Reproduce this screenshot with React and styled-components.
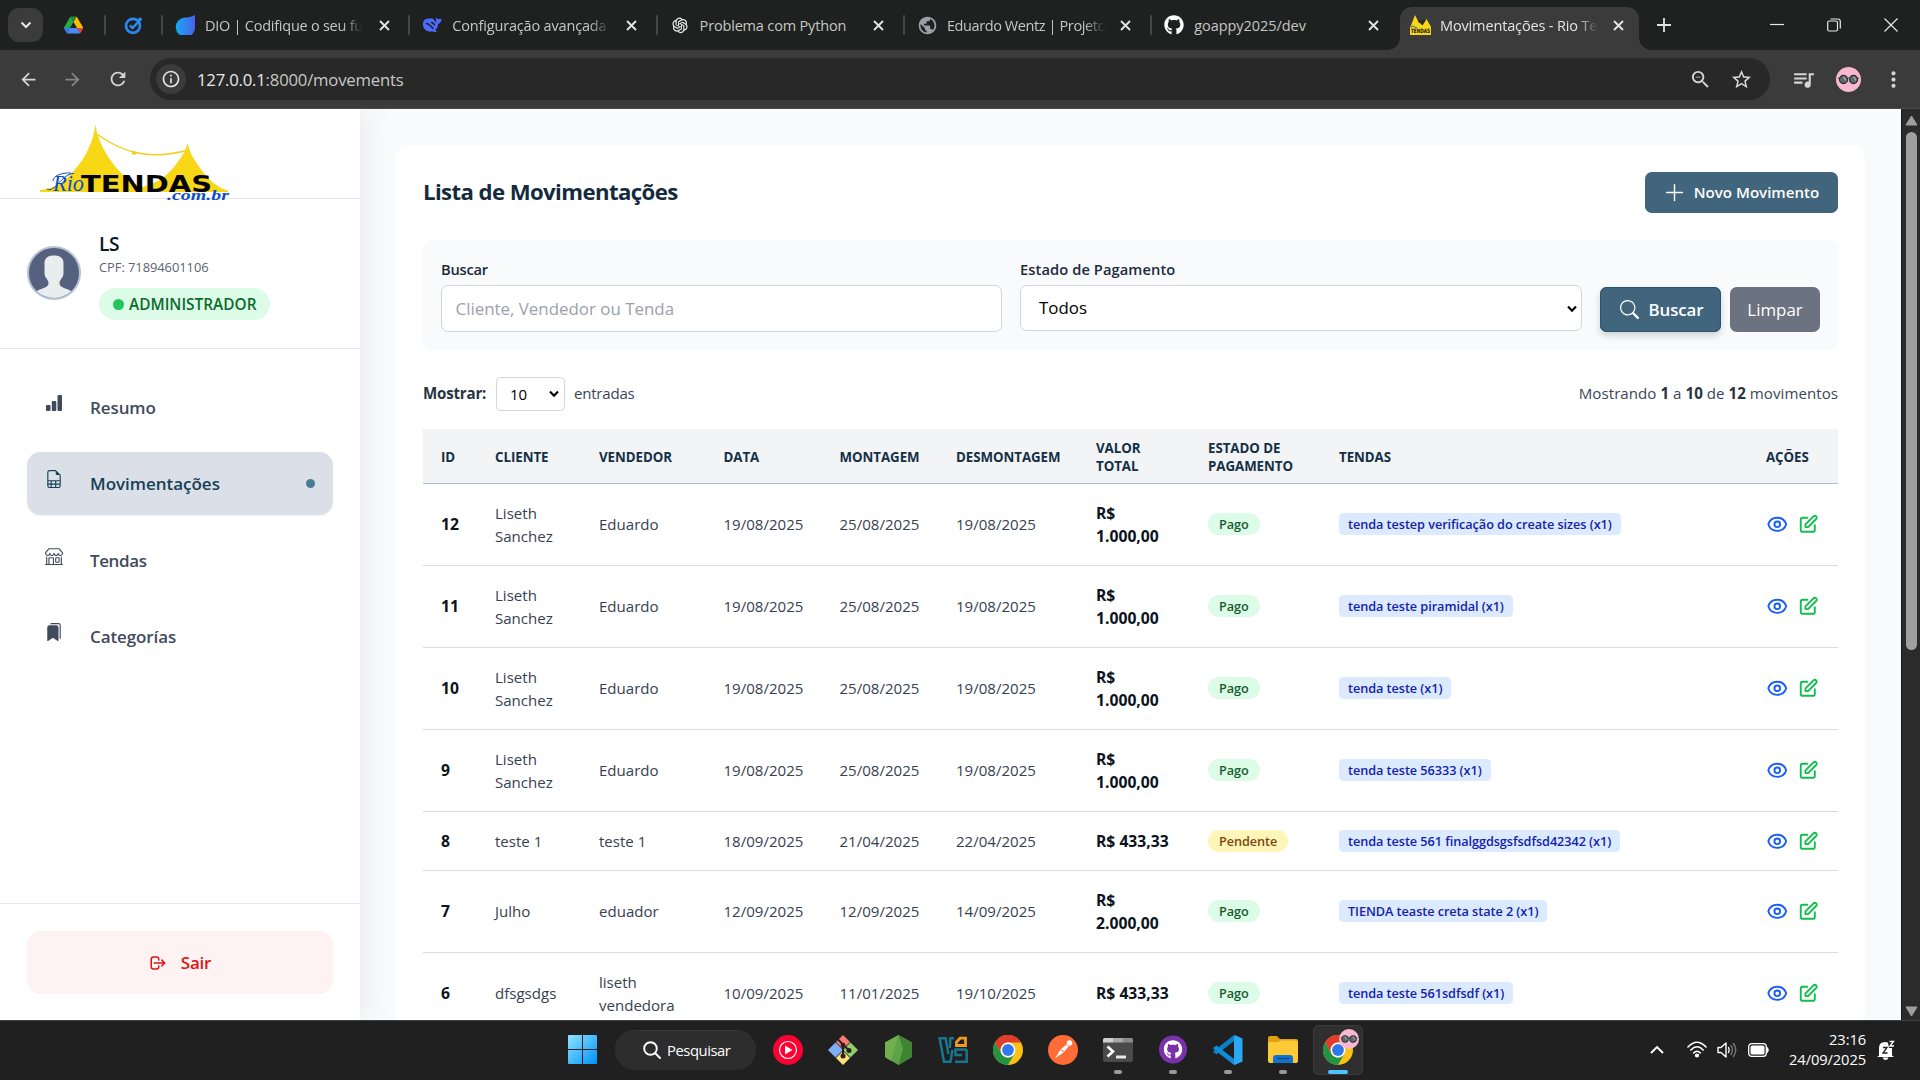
import React from "react";
import styled, { createGlobalStyle, css } from "styled-components";
import { BsFileEarmarkSpreadsheet, BsShop, BsBookmarksFill, BsPlusLg, BsSearch } from "react-icons/bs";
import { MdArrowBack, MdArrowForward, MdRefresh, MdInfoOutline, MdStarBorder, MdZoomOut, MdQueueMusic, MdMoreVert, MdPublic } from "react-icons/md";
import { FaGithub } from "react-icons/fa";
import { AiOutlineOpenAI } from "react-icons/ai";

const Global = createGlobalStyle`
  *, *::before, *::after { box-sizing: border-box; }
  body { margin: 0; overflow: hidden; background: #202020; }
  body, button, input, select { font-family: "Open Sans", "Noto Sans", sans-serif; }
  svg { display: block; flex: none; }
`;

const Screen = styled.div`
  width: 1920px;
  height: 1080px;
  display: flex;
  flex-direction: column;
  overflow: hidden;
`;

/* ---------- browser: tab strip ---------- */

const TabStrip = styled.div`
  height: 50px;
  flex: none;
  background: #1f2120;
  display: flex;
  align-items: center;
`;
const TabSearch = styled.div`
  width: 35px;
  height: 34px;
  margin-left: 8px;
  border-radius: 11px;
  background: #3b3b3b;
  display: grid;
  place-items: center;
`;
const PinnedTab = styled.div`
  width: ${(p) => p.$w}px;
  display: flex;
  justify-content: center;
`;
const Divider = styled.div`
  width: 2px;
  height: 20px;
  flex: none;
  border-radius: 1px;
  background: #444645;
`;
const TabBox = styled.div`
  width: ${(p) => p.$w || 245.3}px;
  flex: none;
  height: 43px;
  align-self: flex-end;
  padding-bottom: 7px;
  display: flex;
  align-items: center;
  padding-left: ${(p) => (p.$active ? 10 : 12)}px;
  ${(p) =>
    p.$active &&
    css`
      position: relative;
      margin-left: 2.5px;
      background: #3b3b3b;
      border-radius: 12px 12px 0 0;
      &::before, &::after {
        content: "";
        position: absolute;
        bottom: 0;
        width: 12px;
        height: 12px;
      }
      &::before { left: -12px; background: radial-gradient(circle at 0 0, transparent 11.5px, #3b3b3b 12px); }
      &::after { right: -12px; background: radial-gradient(circle at 100% 0, transparent 11.5px, #3b3b3b 12px); }
    `}
`;
const TabLabel = styled.span`
  width: 158px;
  margin-left: 10px;
  padding-top: 2px;
  overflow: hidden;
  white-space: nowrap;
  font-size: 14.5px;
  line-height: 20px;
  letter-spacing: ${(p) => p.$ls || -0.17}px;
  color: ${(p) => (p.$active ? "#e3e3e3" : "#c4c7c5")};
  ${(p) => p.$fade && css`mask-image: linear-gradient(90deg, #000 87%, transparent 100%);`}
`;
const CloseX = styled.span`
  width: 20px;
  margin-left: 11px;
  display: grid;
  place-items: center;
  svg { width: 11px; height: 11px; stroke: #e3e3e3; stroke-width: 1.9; fill: none; }
`;
const TabIcon = styled.span`
  width: 20px;
  height: 20px;
  flex: none;
  display: grid;
  place-items: center;
`;
const WindowButtons = styled.div`
  margin-left: auto;
  margin-right: 1px;
  height: 48px;
  display: flex;
  svg { stroke: #e8e8e8; fill: none; stroke-width: 1.2; }
`;
const WindowButton = styled.div`
  width: 57px;
  display: grid;
  place-items: center;
`;

/* ---------- browser: toolbar ---------- */

const Toolbar = styled.div`
  height: 59px;
  flex: none;
  background: #3b3b3b;
  border-bottom: 1px solid #4a4a4a;
  display: flex;
  align-items: center;
  color: #d0d0d0;
`;
const ToolIcon = styled.span`
  width: ${(p) => p.$w}px;
  flex: none;
  display: flex;
  justify-content: center;
  color: ${(p) => (p.$dim ? "#858585" : "#d5d5d5")};
`;
const Omnibox = styled.div`
  width: 1620px;
  flex: none;
  height: 42px;
  margin-left: 3px;
  border-radius: 21px;
  background: #282828;
  display: flex;
  align-items: center;
  padding: 0 8px 0 6px;
`;
const InfoCircle = styled.span`
  width: 30px;
  height: 30px;
  border-radius: 50%;
  background: #3b3b3b;
  display: grid;
  place-items: center;
  color: #e3e3e3;
`;
const Url = styled.span`
  margin-left: 11px;
  padding-top: 1px;
  flex: 1;
  font-size: 16.7px;
  line-height: 24px;
  letter-spacing: -0.2px;
  color: #c7c7c7;
  b { font-weight: 400; color: #e8e8e8; }
`;

/* ---------- page ---------- */

const Page = styled.div`
  flex: 1;
  min-height: 0;
  display: flex;
  background: #f9fafc;
`;
const Sidebar = styled.aside`
  width: 360px;
  flex: none;
  background: #fff;
  display: flex;
  flex-direction: column;
  box-shadow: 0 0 34px rgba(15, 23, 42, 0.09);
  clip-path: inset(0 -60px 0 0);
`;
const LogoBox = styled.div`
  height: 90px;
  flex: none;
  padding: 16px 0 0 39px;
  border-bottom: 1px solid #e3e6eb;
`;
const Profile = styled.div`
  height: 150px;
  flex: none;
  padding: 27px;
  border-bottom: 1px solid #e3e6eb;
  display: flex;
  align-items: center;
  gap: 18px;
  > svg { margin-top: -1px; }
`;
const ProfileInfo = styled.div`
  margin-top: 4px;
`;
const ProfileName = styled.div`
  font-size: 19.2px;
  font-weight: 600;
  line-height: 25px;
  letter-spacing: -0.4px;
  color: #0b1526;
`;
const ProfileDoc = styled.div`
  font-size: 12.9px;
  line-height: 18px;
  margin-top: 2px;
  letter-spacing: -0.05px;
  color: #5b6472;
`;
const RoleBadge = styled.div`
  margin-top: 12px;
  width: 171px;
  height: 32px;
  border-radius: 16px;
  background: #dcfce7;
  color: #0b6b2e;
  display: flex;
  align-items: center;
  padding-left: 14px;
  font-size: 15.4px;
  font-weight: 600;
  &::before {
    content: "";
    width: 11px;
    height: 11px;
    margin-right: 5px;
    border-radius: 50%;
    background: #22c55e;
  }
`;
const Nav = styled.nav`
  flex: 1;
  padding: 27px 27px 0;
  display: flex;
  flex-direction: column;
  gap: 13.3px;
`;
const NavItem = styled.a`
  height: 63px;
  flex: none;
  border-radius: 13.5px;
  padding: 0 18px;
  display: flex;
  align-items: center;
  font-size: 17px;
  font-weight: 600;
  letter-spacing: ${(p) => p.$ls || -0.1}px;
  color: ${(p) => (p.$active ? "#174055" : "#3f4b5c")};
  background: ${(p) => (p.$active ? "#dbdfe8" : "transparent")};
  box-shadow: ${(p) => (p.$active ? "0 1px 2px rgba(0,0,0,.06)" : "none")};
  svg { width: 18px; height: 18px; margin: -9px 27px 0 0; }
  ${(p) =>
    p.$active &&
    css`
      &::after {
        content: "";
        width: 9px;
        height: 9px;
        margin-left: auto;
        border-radius: 50%;
        background: #4a7c93;
      }
    `}
`;
const SidebarFoot = styled.div`
  height: 117px;
  flex: none;
  border-top: 1px solid #e3e6eb;
  padding: 27px;
`;
const LogoutButton = styled.button`
  width: 100%;
  height: 63px;
  border: 0;
  border-radius: 13.5px;
  background: #fef2f2;
  color: #dc1414;
  display: flex;
  align-items: center;
  justify-content: center;
  gap: 14px;
  padding: 0;
  font-size: 17px;
  font-weight: 600;
  letter-spacing: -0.2px;
`;

const Main = styled.main`
  flex: 1;
  min-width: 0;
  padding: 36px 36px 0;
  overflow: hidden;
`;
const Card = styled.section`
  height: 1200px;
  background: #fff;
  border-radius: 13.5px;
  padding: 27px;
`;
const CardHead = styled.header`
  height: 41px;
  display: flex;
  align-items: center;
  justify-content: space-between;
`;
const Title = styled.h1`
  margin: 0;
  padding-bottom: 1px;
  font-size: 22.2px;
  font-weight: 700;
  line-height: 32px;
  letter-spacing: -0.6px;
  color: #142b3d;
`;
const Button = styled.button`
  width: ${(p) => p.$w}px;
  height: ${(p) => p.$h || 45}px;
  flex: none;
  border: 0;
  padding: ${(p) => (p.$h ? "0 0 2px 2px" : 0)};
  border-radius: 6.75px;
  display: flex;
  align-items: center;
  justify-content: center;
  gap: 10px;
  color: #fff;
  background: ${(p) => (p.$muted ? "#6b7280" : "#40657c")};
  font-size: ${(p) => p.$fs || 16.9}px;
  font-weight: ${(p) => (p.$muted ? 400 : 600)};
  white-space: nowrap;
  ${(p) => p.$raised && css`padding-left: 2px; letter-spacing: -0.1px; box-shadow: inset 0 0 0 1px #255772, 0 4px 7px rgba(0, 0, 0, 0.16);`}
`;
const PlusMark = styled(BsPlusLg)`
  width: 23px;
  height: 23px;
  margin: 1px -2px 0 -3px;
`;
const Filters = styled.form`
  margin-top: 27px;
  height: 110px;
  padding: 18px;
  border-radius: 9px;
  background: #f9fafc;
  display: flex;
  align-items: flex-start;
`;
const Field = styled.label`
  width: ${(p) => p.$w || 561}px;
  margin-right: 18px;
  font-size: 14.7px;
  line-height: 22.5px;
  font-weight: 600;
  letter-spacing: ${(p) => p.$ls || -0.05}px;
  color: #1d2a3c;
`;
const TextInput = styled.input`
  display: block;
  width: 100%;
  height: 47px;
  margin-top: 4.5px;
  padding: 0 13.5px;
  border: 1px solid #d1d5db;
  border-radius: 6.75px;
  background: #fff;
  font-size: 16.9px;
  outline: 0;
  &::placeholder { color: #9aa1ad; opacity: 1; }
`;
const Select = styled.div`
  width: ${(p) => (p.$small ? "69px" : "100%")};
  height: ${(p) => (p.$small ? 34 : 46)}px;
  margin-top: ${(p) => (p.$small ? 0 : 4.5)}px;
  padding: ${(p) => (p.$small ? "0 5px 0 13px" : "1px 4px 0 18px")};
  border: 1px solid #d1d5db;
  border-radius: ${(p) => (p.$small ? 4.5 : 6.75)}px;
  background: #fff;
  display: flex;
  align-items: center;
  justify-content: space-between;
  font-size: ${(p) => (p.$small ? 15 : 16.9)}px;
  font-weight: 400;
  letter-spacing: 0;
  color: #000;
`;
const FilterActions = styled.div`
  margin-top: 29px;
  display: flex;
  gap: 9px;
`;
const ListBar = styled.div`
  margin-top: 27px;
  height: 34px;
  display: flex;
  align-items: center;
  font-size: 15.1px;
  color: #3b4657;
  b { font-weight: 700; color: #27333f; }
`;
const ShowLabel = styled.b`
  width: 73px;
  padding-bottom: 2px;
  letter-spacing: -0.2px;
`;
const Entries = styled.span`
  margin-left: 9px;
  padding-bottom: 2px;
  letter-spacing: -0.25px;
`;
const Summary = styled.span`
  margin-left: auto;
  padding-bottom: 2px;
  letter-spacing: 0.04px;
`;

/* ---------- table ---------- */

const Table = styled.table`
  width: 1415px;
  margin-top: 18px;
  table-layout: fixed;
  border-collapse: separate;
  border-spacing: 0;
`;
const Th = styled.th`
  height: 55px;
  padding: 1px 0 0 18px;
  border-bottom: 1px solid #b3bfd0;
  background: #f2f4f6;
  text-align: left;
  white-space: nowrap;
  font-size: 13.3px;
  line-height: 18px;
  font-weight: 700;
  letter-spacing: -0.05px;
  color: #123046;
`;
const Td = styled.td`
  height: ${(p) => p.$h}px;
  padding: 0 0 0 18px;
  border-bottom: 1px solid #d9dce5;
  font-size: ${(p) => (p.$strong ? 15.7 : 15.05)}px;
  line-height: 22.5px;
  white-space: nowrap;
  vertical-align: middle;
  font-weight: ${(p) => (p.$strong ? 700 : 400)};
  color: ${(p) => (p.$strong ? "#0c1320" : "#374151")};
`;
const Chip = styled.span`
  display: inline-block;
  vertical-align: middle;
  height: 22px;
  line-height: 22.5px;
  padding: 0 ${(p) => (p.$tag ? 9 : 11)}px;
  border-radius: ${(p) => (p.$tag ? 4.5 : 11)}px;
  font-size: 12.7px;
  font-weight: 600;
  letter-spacing: -0.06px;
  background: ${(p) => (p.$tag ? "#dbeafe" : p.$warn ? "#fef5b8" : "#dcfce7")};
  color: ${(p) => (p.$tag ? "#1423aa" : p.$warn ? "#7c4a0c" : "#175c31")};
  margin-top: -4px;
`;
const RowActions = styled.div`
  display: flex;
  gap: 8.5px;
  padding-bottom: 0.5px;
`;

/* ---------- scrollbar ---------- */

const ScrollTrack = styled.div`
  width: 19px;
  flex: none;
  background: #2b2b2b;
  border-left: 1px solid #1a1a1a;
  display: flex;
  flex-direction: column;
  align-items: center;
  padding: 6px 0 3px;
  svg { fill: #9f9f9f; }
`;
const ScrollThumb = styled.div`
  width: 11px;
  height: 518px;
  margin: 6px 0 auto;
  border-radius: 6px;
  background: #9f9f9f;
`;

/* ---------- taskbar ---------- */

const Taskbar = styled.footer`
  height: 60px;
  flex: none;
  background: #202020;
  border-top: 1px solid #3e3e3e;
  display: flex;
  align-items: center;
  padding: 0 0 2px 568px;
  color: #fff;
`;
const SearchPill = styled.div`
  width: 141px;
  height: 40px;
  margin: 0 7px 0 18px;
  padding-left: 28px;
  border-radius: 20px;
  background: #2d2d2d;
  border-top: 1px solid #383838;
  display: flex;
  align-items: center;
  gap: 6px;
  font-size: 14.8px;
  letter-spacing: -0.45px;
`;
const AppSlot = styled.div`
  width: 50px;
  height: 50px;
  margin-right: 5px;
  position: relative;
  flex: none;
  display: grid;
  place-items: center;
  border-radius: 6px;
  ${(p) => p.$active && css`background: #2f2f2f; box-shadow: inset 0 0 0 1px #3b3b3b;`}
  &::after {
    content: "";
    position: absolute;
    bottom: 1px;
    left: 50%;
    transform: translateX(-50%);
    width: ${(p) => (p.$active ? 20 : 8)}px;
    height: 4px;
    border-radius: 2px;
    background: ${(p) => (p.$active ? "#4cc2ff" : p.$running ? "#9a9a9a" : "transparent")};
  }
`;
const FaceBadge = styled.span`
  position: absolute;
  top: 4px;
  right: 4px;
`;
const Tray = styled.div`
  margin-left: auto;
  height: 100%;
  display: flex;
  align-items: center;
`;
const TraySlot = styled.span`
  width: ${(p) => p.$w}px;
  display: flex;
  justify-content: center;
`;
const Clock = styled.div`
  width: 87px;
  text-align: right;
  font-size: 14.7px;
  line-height: 20px;
  letter-spacing: -0.1px;
  padding-bottom: 2px;
`;
const Bell = styled.span`
  width: 40px;
  margin-right: 14px;
  display: flex;
  justify-content: center;
`;

/* ---------- drawings ---------- */

const X = () => (
  <svg viewBox="0 0 11 11"><path d="M1 1L10 10M10 1L1 10" /></svg>
);
const Caret = () => (
  <svg width="10" height="8" viewBox="0 0 10 8" fill="none" stroke="#000" strokeWidth="2.1"><path d="M1 1.5L5 5.700L9 1.500" /></svg>
);
const TendasLogo = () => (
  <svg width="192" height="80" viewBox="0 0 192 80">
    <path d="M1 65C22 63 31 50 38 42C48 30 54 16 56.500 0C59 16 66 28 75 40C84 51 92 58 104 62C120 58 131 48 138 38C144 30 147 25 148.500 18C150 26 154 33 159 40C167 52 176 62 189 65.500V67H1z" fill="#f7d716" />
    <path d="M59 10C84 27 108 35 146 26" fill="none" stroke="#f2cf1a" strokeWidth="1.400" />
    <rect x="93" y="26.500" width="4" height="3" fill="#f2cf1a" />
    <text x="14" y="66" fontFamily="Liberation Serif, serif" fontStyle="italic" fontSize="24" fill="#0b4fc4" textLength="31" lengthAdjust="spacingAndGlyphs">Rio</text>
    <path d="M8 64C10 66 14 64 18 60C24 53 30 48 35 48.500M14 56C14 51 22 47.500 32 48" fill="none" stroke="#0b4fc4" strokeWidth="1" />
    <text x="42" y="67" fontFamily="DejaVu Sans, sans-serif" fontWeight="700" fontSize="23.500" fill="#050505" textLength="131" lengthAdjust="spacingAndGlyphs">TENDAS</text>
    <text x="128" y="75" fontFamily="Liberation Serif, serif" fontStyle="italic" fontWeight="700" fontSize="15" fill="#0b4fc4" textLength="62" lengthAdjust="spacingAndGlyphs">.com.br</text>
  </svg>
);
const Avatar = () => (
  <svg width="54" height="54" viewBox="0 0 54 54">
    <clipPath id="av"><circle cx="27" cy="27" r="25" /></clipPath>
    <circle cx="27" cy="27" r="26" fill="#56607f" stroke="#b6c3d6" strokeWidth="2" />
    <path clipPath="url(#av)" d="M27 9.500C33 9.500 36.500 12 36.500 17V27C36.500 32 32.500 33.500 32.500 37C32.500 42 38 41.500 44 45L50 54H4L10 45C16 41.500 21.500 42 21.500 37C21.500 33.500 17.500 32 17.500 27V17C17.500 12 21 9.500 27 9.500z" fill="#e8eeee" />
  </svg>
);
const BarsIcon = () => (
  <svg viewBox="0 0 18 18" fill="#3f4b5c"><rect x="1" y="11" width="4.500" height="6" rx="1" /><rect x="6.800" y="7" width="4.500" height="10" rx="1" /><rect x="12.500" y="1" width="4.500" height="16" rx="1" /></svg>
);
const LogoutIcon = () => (
  <svg width="18" height="18" viewBox="0 0 24 24" fill="none" stroke="#dc1414" strokeWidth="2" strokeLinecap="round" strokeLinejoin="round">
    <path d="M17 16l4-4m0 0l-4-4m4 4H7m6 4v1a3 3 0 01-3 3H6a3 3 0 01-3-3V7a3 3 0 013-3h4a3 3 0 013 3v1" />
  </svg>
);
const EyeIcon = () => (
  <svg width="22.5" height="22.5" viewBox="0 0 24 24" fill="none" stroke="#155dfc" strokeWidth="2" strokeLinecap="round" strokeLinejoin="round">
    <path d="M15 12a3 3 0 11-6 0 3 3 0 016 0z" />
    <path d="M2.458 12C3.732 7.943 7.523 5 12 5c4.478 0 8.268 2.943 9.542 7-1.274 4.057-5.064 7-9.542 7-4.477 0-8.268-2.943-9.542-7z" />
  </svg>
);
const EditIcon = () => (
  <svg width="22.5" height="22.5" viewBox="0 0 24 24" fill="none" stroke="#0fbf4b" strokeWidth="2" strokeLinecap="round" strokeLinejoin="round">
    <path d="M11 5H6a2 2 0 00-2 2v11a2 2 0 002 2h11a2 2 0 002-2v-5m-1.414-9.414a2 2 0 112.828 2.828L11.828 15H9v-2.828l8.586-8.586z" />
  </svg>
);
const Triangle = ({ down }) => (
  <svg width="13" height="11" viewBox="0 0 13 11"><path d={down ? "M1 1H12L6.500 10z" : "M1 10H12L6.500 1z"} stroke="#9f9f9f" strokeLinejoin="round" /></svg>
);
const DriveIcon = () => (
  <svg width="19" height="18" viewBox="0 0 87 78">
    <path d="M6.600 66.900l3.900 6.600c.8 1.400 1.900 2.500 3.300 3.300L27.500 53H0c0 1.500.4 3.100 1.200 4.500z" fill="#3c78e8" />
    <path d="M43.600 25L29.900 1.200c-1.300.8-2.500 1.900-3.300 3.300L1.200 48.500A9 9 0 000 53h27.500z" fill="#2aa84a" />
    <path d="M73.500 76.800c1.400-.8 2.500-1.900 3.300-3.300l9.300-16c.8-1.400 1.200-3 1.200-4.500H59.800l5.800 11.500z" fill="#ea4335" />
    <path d="M43.600 25L57.400 1.200C56 .4 54.400 0 52.900 0H34.400c-1.600 0-3.100.4-4.500 1.200z" fill="#1d8a3a" />
    <path d="M59.800 53H27.500L13.700 76.800c1.400.8 3 1.200 4.500 1.200h50.900c1.600 0 3.100-.4 4.500-1.200z" fill="#4a8bf5" />
    <path d="M73.400 26.500l-12.700-22A9 9 0 0057.400 1.200L43.600 25l16.200 28h27.400c0-1.500-.4-3.100-1.200-4.500z" fill="#fbbc04" />
  </svg>
);
const CheckIcon = () => (
  <svg width="19" height="19" viewBox="0 0 19 19" fill="none" stroke="#2b87f0" strokeWidth="2.700">
    <circle cx="9" cy="9.800" r="7" /><path d="M5.800 9.300L8.600 12L15.500 4.500" stroke="#2f8df5" strokeWidth="2.300" /><circle cx="16" cy="3.500" r="1.200" fill="#2b87f0" strokeWidth="1.500" />
  </svg>
);
const DioIcon = () => (
  <svg width="20" height="20" viewBox="0 0 20 20">
    <defs><linearGradient id="dio" x1="0" x2="1"><stop offset="0" stopColor="#14a9f0" /><stop offset="1" stopColor="#4c60f0" /></linearGradient></defs>
    <path d="M20 0V10.500A9.700 9.700 0 1 1 10.500 2.500C15 2.500 17 1.500 20 0z" fill="url(#dio)" />
  </svg>
);
const WhaleIcon = () => (
  <svg width="20" height="18" viewBox="0 0 21 18" fill="#4d6bfe">
    <path d="M1 7C1.500 3.500 5 1.500 8 2.500C9 1.500 11 1.800 12.500 3.500L15.500 7C14.500 4.500 14.500 3 15 1.200C16 3 17.200 3 20.500 2.500C20.500 5.500 19 7.500 16.800 8C17 11 15.500 13 14 14L15.500 16C13.500 17 12 16.200 10.500 15.600C4.500 17.500 .3 12 1 7z" />
    <path d="M4 7.500C7 6.500 9 10.500 12 13M9.500 6.500C11 6 13 8 13.500 9.500" fill="none" stroke="#1f2120" strokeWidth="1.500" />
  </svg>
);
const TentFavicon = () => (
  <svg width="21" height="20" viewBox="0 0 21 20">
    <path d="M0 20V13L5 0L9 8H13L16.500 4L21 12V20z" fill="#f7d716" />
    <path d="M7.500 5.500L16 5L12.500 10.500z" fill="#2b2b1b" />
    <text x="1" y="18" fontSize="6" fontWeight="700" fontFamily="DejaVu Sans, sans-serif" textLength="19" lengthAdjust="spacingAndGlyphs" fill="#111">TENDAS</text>
    <path d="M1 12.500Q3 9.500 4.500 12L7 13" stroke="#1c6a9a" fill="none" />
  </svg>
);
const PinkFace = ({ size = 25 }) => (
  <svg width={size} height={size} viewBox="0 0 25 25">
    <circle cx="12.500" cy="12.500" r="12.500" fill="#f8b8cf" />
    <circle cx="7.500" cy="12.500" r="4" fill="#5f686b" stroke="#2b3032" strokeWidth="1.300" />
    <circle cx="17.500" cy="12.500" r="4" fill="#5f686b" stroke="#2b3032" strokeWidth="1.300" />
    <path d="M7.500 9.500L10 13.500M17.500 9.500L20 13.500" stroke="#a3b9ba" strokeWidth="1.200" />
    <path d="M11 11.500Q12.500 10.500 14 11.500M2 11L4 12M23 11L21 12" stroke="#33383a" fill="none" />
  </svg>
);
const WindowsIcon = () => (
  <svg width="29" height="29" viewBox="0 0 29 29">
    <defs><linearGradient id="win" x1="0" y1="0" x2="1" y2="1"><stop offset="0" stopColor="#8fe4ff" /><stop offset="1" stopColor="#0091f8" /></linearGradient></defs>
    <path d="M1 0H14V14H0V1Q0 0 1 0zM15 0H28Q29 0 29 1V14H15zM0 15H14V29H1Q0 29 0 28zM15 15H29V28Q29 29 28 29H15z" fill="url(#win)" />
  </svg>
);
const YtMusicIcon = () => (
  <svg width="30" height="30" viewBox="0 0 30 30"><circle cx="15" cy="15" r="15" fill="#ff0033" /><circle cx="15" cy="15" r="8.500" fill="none" stroke="#fff" strokeWidth="1.200" /><path d="M12 10.500L19.500 15L12 19.500z" fill="#fff" /></svg>
);
const GitIcon = () => (
  <svg width="30" height="30" viewBox="0 0 30 30">
    <path d="M15 0L22 7L15 14L8 7z" fill="#f77a73" /><path d="M7.500 7.500L15 15L7.500 22.500L0 15z" fill="#7fb0f5" /><path d="M22.500 7.500L30 15L22.500 22.500L15 15z" fill="#8fd067" /><path d="M15 16L22 23L15 30L8 23z" fill="#fde07a" />
    <path d="M10 4.500L15 9.500V21M15.500 10L21 15.500" stroke="#2b2020" strokeWidth="2" fill="none" />
    <circle cx="15" cy="10" r="2.300" fill="#2b2020" /><circle cx="15" cy="21" r="2.500" fill="#2b2020" /><circle cx="21" cy="15.500" r="2.500" fill="#2b2020" />
  </svg>
);
const NodeIcon = () => (
  <svg width="27" height="30" viewBox="0 0 27 30">
    <path d="M13.500 0L27 7.500V22L13.500 30L0 22V7.500z" fill="#5da348" /><path d="M13.500 0L27 7.500V22L13.500 30L18 14z" fill="#3f8335" /><path d="M0 7.500L13.500 0L6 26L0 22z" fill="#6fb04c" />
  </svg>
);
const VbIcon = () => (
  <svg width="30" height="28" viewBox="0 0 30 28" fill="none" stroke="#17768f" strokeWidth="2.500">
    <path d="M10.500 18L7.500 2.200H1.600L6 25.800H12.500L14.500 14" />
    <path d="M16 2.200H12.500L11.800 12M28.700 13.500H17.500V19H24M17 25.800H28.700V13.500" />
    <path d="M18.500 9.500V6L22 2.200H27.500V9.500z" stroke="#f29a1d" strokeWidth="2.800" />
  </svg>
);
const ChromeIcon = () => (
  <svg width="30" height="30" viewBox="0 0 30 30">
    <circle cx="15" cy="15" r="15" fill="#fbc116" />
    <path d="M2 7.500A15 15 0 0 1 28 7.500H15A7.500 7.500 0 0 0 8.500 18.700z" fill="#e33b2e" />
    <path d="M2 7.500A15 15 0 0 0 15 30L21.500 18.700A7.500 7.500 0 0 1 8.500 18.700z" fill="#229342" />
    <circle cx="15" cy="15" r="7.400" fill="#fff" /><circle cx="15" cy="15" r="5.900" fill="#3078f0" />
  </svg>
);
const PostmanIcon = () => (
  <svg width="30" height="30" viewBox="0 0 30 30"><circle cx="15" cy="15" r="15" fill="#ff6c37" /><path d="M7 23.500L12.500 14.500L18.500 9.500L20.500 11.500L15.500 17.500L9 22z" fill="#fff" /><circle cx="21.500" cy="8" r="2.700" fill="#fff" /><path d="M12.500 15L16 16.500" stroke="#ff6c37" /></svg>
);
const TerminalIcon = () => (
  <svg width="30" height="24" viewBox="0 0 30 24"><rect width="30" height="24" rx="2" fill="#4a4a4a" /><path d="M0 4.500V2Q0 0 2 0H10V4.500z" fill="#cfcfcf" /><path d="M10 0H20V4.500H10z" fill="#a8a8a8" /><path d="M20 0H28Q30 0 30 2V4.500H20z" fill="#8a8a8a" /><path d="M4.500 8.500L10 13.500L4.500 18.500" fill="none" stroke="#fff" strokeWidth="2.600" /><rect x="13" y="17.500" width="10" height="3" fill="#e8e8e8" /></svg>
);
const GithubDesktop = () => (
  <svg width="28" height="29" viewBox="0 0 28 28">
    <circle cx="14" cy="14" r="14" fill="#7b32a8" />
    <FaGithub x="4.5" y="4.5" size={19} color="#fff" />
  </svg>
);
const VsCodeIcon = () => (
  <svg width="30" height="30" viewBox="0 0 30 30">
    <path d="M21 6L3.500 19.500L.5 17.500V16L21 0z" fill="#0b7fc7" /><path d="M21 24L3.500 10.500L.5 12.500V14L21 30z" fill="#0d8ddb" /><path d="M21.500 0L29.500 3.500V26.500L21.500 30C20.500 29.700 21 28 21 28V2z" fill="#2aa9f2" />
  </svg>
);
const FolderIcon = () => (
  <svg width="30" height="27" viewBox="0 0 30 27"><path d="M0 2Q0 0 2 0H9L12 3H28Q30 3 30 5V10H0z" fill="#dfa10d" /><path d="M0 6H10L12 4.500H28Q30 4.500 30 6.500V25Q30 27 28 27H2Q0 27 0 25z" fill="#fdc936" /><path d="M5 27V22Q5 19 8 19H22Q25 19 25 22V27z" fill="#1173cf" /><path d="M9 22.500H21" stroke="#0b4f94" strokeWidth="1.500" /></svg>
);
const WifiIcon = () => (
  <svg width="20" height="17" viewBox="0 0 20 17" fill="none" stroke="#fff" strokeWidth="1.600" strokeLinecap="round"><path d="M1 6Q10 -3.500 19 6M3.800 9Q10 2.500 16.200 9M6.600 12Q10 8.500 13.400 12" /><circle cx="10" cy="14.500" r="1.300" fill="#fff" /></svg>
);
const VolumeIcon = () => (
  <svg width="20" height="18" viewBox="0 0 20 18" fill="none" stroke="#fff" strokeWidth="1.400" strokeLinecap="round" strokeLinejoin="round"><path d="M1 6.500H4L9 2V16L4 11.500H1z" /><path d="M11.500 6.500Q13 9 11.500 11.500" /><path d="M14 4.500Q17 9 14 13.500M16.500 2.500Q21 9 16.500 15.500" stroke="#777" /></svg>
);
const BatteryIcon = () => (
  <svg width="21" height="14" viewBox="0 0 21 14"><rect x=".7" y=".7" width="17.600" height="12.600" rx="3" fill="none" stroke="#fff" strokeWidth="1.300" /><rect x="2.500" y="2.500" width="14" height="9" rx="1.500" fill="#fff" /><path d="M19.500 4.500Q21 7 19.500 9.500z" fill="#fff" stroke="#fff" /></svg>
);
const BellIcon = () => (
  <svg width="18" height="20" viewBox="0 0 18 20"><path d="M2 15.500V8Q2 2 8 2T15 8V15.500L17 17H0z" fill="#fff" /><path d="M5.500 17.500H11.500Q10.500 20 8.500 20T5.500 17.500z" fill="#fff" /><path d="M6 7.500H10L6 13H10.500" fill="none" stroke="#202020" strokeWidth="1.300" /><path d="M10.500 .5H18V8H12z" fill="#202020" /><path d="M12.500 1.500H16.500L13 6H17" fill="none" stroke="#fff" strokeWidth="1.300" /></svg>
);

/* ---------- data ---------- */

const tabs = [
  { icon: <DioIcon />, label: "DIO | Codifique o seu fu", fade: true, ls: -0.25 },
  { icon: <WhaleIcon />, label: "Configuração avançada", fade: true },
  { icon: <AiOutlineOpenAI size={20} color="#e8e8e8" />, label: "Problema com Python" },
  { icon: <MdPublic size={21} color="#9aa0a8" />, label: "Eduardo Wentz | Projeto", fade: true, ls: -0.4 },
  { icon: <FaGithub size={20} color="#fff" />, label: "goappy2025/dev", ls: -0.05 },
];

const columns = [
  [54, ["ID"]], [104, ["CLIENTE"]], [124.5, ["VENDEDOR"]], [116, ["DATA"]], [116.5, ["MONTAGEM"]], [140, ["DESMONTAGEM"]],
  [112, ["VALOR", "TOTAL"]], [131, ["ESTADO DE", "PAGAMENTO"]], [427, ["TENDAS"]], [90, ["AÇÕES"]],
];

const rows = [
  ["12", ["Liseth", "Sanchez"], ["Eduardo"], "19/08/2025", "25/08/2025", "19/08/2025", ["R$", "1.000,00"], "Pago", "tenda testep verificação do create sizes (x1)"],
  ["11", ["Liseth", "Sanchez"], ["Eduardo"], "19/08/2025", "25/08/2025", "19/08/2025", ["R$", "1.000,00"], "Pago", "tenda teste piramidal (x1)"],
  ["10", ["Liseth", "Sanchez"], ["Eduardo"], "19/08/2025", "25/08/2025", "19/08/2025", ["R$", "1.000,00"], "Pago", "tenda teste (x1)"],
  ["9", ["Liseth", "Sanchez"], ["Eduardo"], "19/08/2025", "25/08/2025", "19/08/2025", ["R$", "1.000,00"], "Pago", "tenda teste 56333 (x1)"],
  ["8", ["teste 1"], ["teste 1"], "18/09/2025", "21/04/2025", "22/04/2025", ["R$ 433,33"], "Pendente", "tenda teste 561 finalggdsgsfsdfsd42342 (x1)"],
  ["7", ["Julho"], ["eduador"], "12/09/2025", "12/09/2025", "14/09/2025", ["R$", "2.000,00"], "Pago", "TIENDA teaste creta state 2 (x1)"],
  ["6", ["dfsgsdgs"], ["liseth", "vendedora"], "10/09/2025", "11/01/2025", "19/10/2025", ["R$ 433,33"], "Pago", "tenda teste 561sdfsdf (x1)"],
];

const Lines = ({ of }) => of.map((t, i) => <React.Fragment key={i}>{i > 0 && <br />}{t}</React.Fragment>);

const apps = [
  [<YtMusicIcon />], [<GitIcon />], [<NodeIcon />], [<VbIcon />], [<ChromeIcon />], [<PostmanIcon />],
  [<TerminalIcon />, true], [<GithubDesktop />, true], [<VsCodeIcon />, true], [<FolderIcon />, true],
];

export default function App() {
  return (
    <Screen>
      <Global />
      <TabStrip>
        <TabSearch>
          <svg width="12" height="8" viewBox="0 0 12 8" fill="none" stroke="#e8e8e8" strokeWidth="2"><path d="M1.500 1.500L6 6L10.500 1.500" /></svg>
        </TabSearch>
        <PinnedTab $w={61}><DriveIcon /></PinnedTab>
        <Divider />
        <PinnedTab $w={55}><CheckIcon /></PinnedTab>
        {tabs.map((t) => (
          <React.Fragment key={t.label}>
            <Divider />
            <TabBox>
              <TabIcon>{t.icon}</TabIcon>
              <TabLabel $fade={t.fade} $ls={t.ls}>{t.label}</TabLabel>
              <CloseX><X /></CloseX>
            </TabBox>
          </React.Fragment>
        ))}
        <TabBox $active $w={239}>
          <TabIcon><TentFavicon /></TabIcon>
          <TabLabel $active $fade $ls={-0.14}>Movimentações - Rio Te</TabLabel>
          <CloseX><X /></CloseX>
        </TabBox>
        <PinnedTab $w={51}>
          <svg width="14" height="14" viewBox="0 0 14 14" stroke="#e3e3e3" strokeWidth="1.800"><path d="M7 0V14M0 7H14" /></svg>
        </PinnedTab>
        <WindowButtons>
          <WindowButton><svg width="14" height="14" viewBox="0 0 14 14"><path d="M0 6.500H14" /></svg></WindowButton>
          <WindowButton><svg width="14" height="14" viewBox="0 0 14 14"><rect x=".7" y="3" width="9.800" height="10" rx="1.500" /><path d="M3.500 1H11Q13.300 1 13.300 3.500V10.500" /></svg></WindowButton>
          <WindowButton><svg width="14" height="14" viewBox="0 0 14 14"><path d="M.5 .5L13.500 13.500M13.500 .5L.5 13.500" /></svg></WindowButton>
        </WindowButtons>
      </TabStrip>

      <Toolbar>
        <ToolIcon $w={56}><MdArrowBack size={21} /></ToolIcon>
        <ToolIcon $w={33} $dim><MdArrowForward size={21} /></ToolIcon>
        <ToolIcon $w={58}><MdRefresh size={22} /></ToolIcon>
        <Omnibox>
          <InfoCircle><MdInfoOutline size={20} /></InfoCircle>
          <Url><b>127.0.0.1</b>:8000/movements</Url>
          <ToolIcon $w={41}><MdZoomOut size={23} /></ToolIcon>
          <ToolIcon $w={41}><MdStarBorder size={23} /></ToolIcon>
        </Omnibox>
        <ToolIcon $w={66}><MdQueueMusic size={25} /></ToolIcon>
        <ToolIcon $w={25}><PinkFace /></ToolIcon>
        <ToolIcon $w={64}><MdMoreVert size={25} /></ToolIcon>
      </Toolbar>

      <Page>
        <Sidebar>
          <LogoBox><TendasLogo /></LogoBox>
          <Profile>
            <Avatar />
            <ProfileInfo>
              <ProfileName>LS</ProfileName>
              <ProfileDoc>CPF: 71894601106</ProfileDoc>
              <RoleBadge>ADMINISTRADOR</RoleBadge>
            </ProfileInfo>
          </Profile>
          <Nav>
            <NavItem><BarsIcon />Resumo</NavItem>
            <NavItem $active $ls={-0.02}><BsFileEarmarkSpreadsheet />Movimentações</NavItem>
            <NavItem $ls={-0.4}><BsShop />Tendas</NavItem>
            <NavItem><BsBookmarksFill />Categorías</NavItem>
          </Nav>
          <SidebarFoot>
            <LogoutButton><LogoutIcon />Sair</LogoutButton>
          </SidebarFoot>
        </Sidebar>

        <Main>
          <Card>
            <CardHead>
              <Title>Lista de Movimentações</Title>
              <Button $w={193} $h={41} $fs={15.1}><PlusMark />Novo Movimento</Button>
            </CardHead>
            <Filters>
              <Field $ls={-0.25}>Buscar<TextInput placeholder="Cliente, Vendedor ou Tenda" /></Field>
              <Field $w={562} $ls={0.08}>Estado de Pagamento<Select>Todos<Caret /></Select></Field>
              <FilterActions>
                <Button $w={121} $raised type="button"><BsSearch size={19} />Buscar</Button>
                <Button $w={90} $muted type="button">Limpar</Button>
              </FilterActions>
            </Filters>
            <ListBar>
              <ShowLabel>Mostrar:</ShowLabel>
              <Select $small>10<Caret /></Select>
              <Entries>entradas</Entries>
              <Summary>Mostrando <b>1</b> a <b>10</b> de <b>12</b> movimentos</Summary>
            </ListBar>
            <Table>
              <colgroup>{columns.map(([w], i) => <col key={i} width={w} />)}</colgroup>
              <thead>
                <tr>{columns.map(([, t]) => <Th key={t[0]}><Lines of={t} /></Th>)}</tr>
              </thead>
              <tbody>
                {rows.map((r) => {
                  const h = r[1].length + r[2].length + r[6].length > 3 ? 82 : 59;
                  return (
                    <tr key={r[0]}>
                      <Td $h={h} $strong>{r[0]}</Td>
                      <Td $h={h}><Lines of={r[1]} /></Td>
                      <Td $h={h}><Lines of={r[2]} /></Td>
                      <Td $h={h}>{r[3]}</Td>
                      <Td $h={h}>{r[4]}</Td>
                      <Td $h={h}>{r[5]}</Td>
                      <Td $h={h} $strong><Lines of={r[6]} /></Td>
                      <Td $h={h}><Chip $warn={r[7] !== "Pago"}>{r[7]}</Chip></Td>
                      <Td $h={h}><Chip $tag>{r[8]}</Chip></Td>
                      <Td $h={h}><RowActions><EyeIcon /><EditIcon /></RowActions></Td>
                    </tr>
                  );
                })}
              </tbody>
            </Table>
          </Card>
        </Main>
        <ScrollTrack><Triangle /><ScrollThumb /><Triangle down /></ScrollTrack>
      </Page>

      <Taskbar>
        <WindowsIcon />
        <SearchPill>
          <svg width="18" height="18" viewBox="0 0 18 18" fill="none" stroke="#fff" strokeWidth="1.900" strokeLinecap="round"><circle cx="7.500" cy="7.500" r="6.300" /><path d="M12 12L17 17" /></svg>
          Pesquisar
        </SearchPill>
        {apps.map(([icon, running], i) => (
          <AppSlot key={i} $running={running}>{icon}</AppSlot>
        ))}
        <AppSlot $active><ChromeIcon /><FaceBadge><PinkFace size={20} /></FaceBadge></AppSlot>
        <Tray>
          <TraySlot $w={40}><svg width="14" height="9" viewBox="0 0 14 9" fill="none" stroke="#fff" strokeWidth="1.900"><path d="M1 8L7 2L13 8" /></svg></TraySlot>
          <TraySlot $w={40}><WifiIcon /></TraySlot>
          <TraySlot $w={20}><VolumeIcon /></TraySlot>
          <TraySlot $w={42}><BatteryIcon /></TraySlot>
          <Clock>23:16<br />24/09/2025</Clock>
          <Bell><BellIcon /></Bell>
        </Tray>
      </Taskbar>
    </Screen>
  );
}
